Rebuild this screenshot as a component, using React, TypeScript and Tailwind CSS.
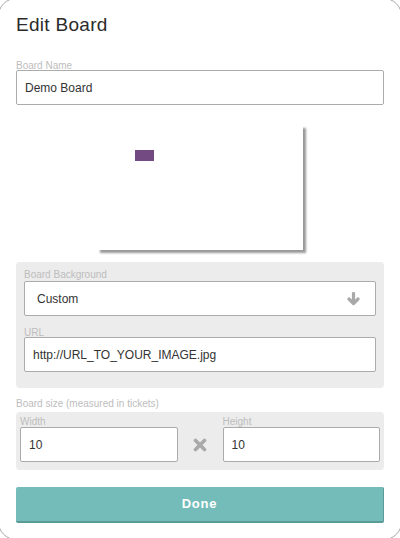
import React from "react";

const font = { fontFamily: '"Liberation Sans", Arial, sans-serif' };

function Label({ children, className = "" }: { children: React.ReactNode; className?: string }) {
  return (
    <div className={`text-[10px] leading-[9px] text-[#bdbdbd] ${className}`}>{children}</div>
  );
}

function Field({ value, className = "" }: { value: string; className?: string }) {
  return (
    <div
      className={`flex h-[35px] items-center rounded-[2px] border border-[#ababab] bg-white pl-[8px] text-[12px] text-[#333] ${className}`}
    >
      {value}
    </div>
  );
}

function ArrowDownIcon() {
  return (
    <svg width="13" height="14" viewBox="0 0 13 14" fill="none">
      <path d="M6.5 1.5v9" stroke="#a9a9a9" strokeWidth="3.2" strokeLinecap="round" />
      <path
        d="M2 7l4.5 4.5L11 7"
        stroke="#a9a9a9"
        strokeWidth="3.2"
        strokeLinecap="round"
        strokeLinejoin="round"
      />
    </svg>
  );
}

function TimesIcon() {
  return (
    <svg width="14" height="14" viewBox="0 0 14 14" fill="none">
      <path
        d="M2.5 2.5l9 9M11.5 2.5l-9 9"
        stroke="#a9a9a9"
        strokeWidth="3.6"
        strokeLinecap="round"
      />
    </svg>
  );
}

export default function App() {
  return (
    <div className="h-[538px] w-[400px] overflow-hidden bg-white" style={font}>
      <div className="-ml-[2px] -mt-[2px] h-[542px] w-[404px] rounded-[18px] border border-[#a8a8a8] px-[17px] pt-[14px]">
        {/* Title */}
        <h1 className="text-[19px] leading-[24px] tracking-[0.3px] text-[#2b2b2b]">Edit Board</h1>

        {/* Board name */}
        <Label className="mt-[24px]">Board Name</Label>
        <Field value="Demo Board" />

        {/* Preview */}
        <div className="relative mx-auto mt-[20px] h-[125px] w-[206px] bg-white shadow-[3px_3px_2px_rgba(0,0,0,0.4)]">
          <div className="absolute left-[38px] top-[25px] h-[11px] w-[19px] bg-[#744a82]" />
        </div>

        {/* Background panel */}
        <div className="mt-[12px] rounded-[4px] bg-[#ececec] px-[8px] pb-[16px] pt-[8px]">
          <Label>Board Background</Label>
          <div className="mt-[2px] flex h-[35px] items-center justify-between rounded-[2px] border border-[#ababab] bg-white pl-[12px] pr-[15px] text-[12px] text-[#333]">
            <span>Custom</span>
            <ArrowDownIcon />
          </div>
          <Label className="mt-[12px]">URL</Label>
          <Field value="http://URL_TO_YOUR_IMAGE.jpg" />
        </div>

        {/* Size */}
        <Label className="mt-[11px]">Board size (measured in tickets)</Label>
        <div className="mt-[4px] grid grid-cols-[1fr_45px_1fr] rounded-[4px] bg-[#ececec] px-[4px] pb-[8px] pt-[5px]">
          <div>
            <Label>Width</Label>
            <Field value="10" className="mt-[1px]" />
          </div>
          <div className="flex items-end justify-center pb-[10px]">
            <TimesIcon />
          </div>
          <div>
            <Label>Height</Label>
            <Field value="10" className="mt-[1px]" />
          </div>
        </div>

        {/* Done */}
        <button className="mt-[17px] flex h-[36px] w-full items-center justify-center rounded-[2px] border-b-2 border-r border-[#5a9b98] bg-[#73bcb9] text-[13px] font-bold tracking-[0.8px] text-white">
          Done
        </button>
      </div>
    </div>
  );
}
